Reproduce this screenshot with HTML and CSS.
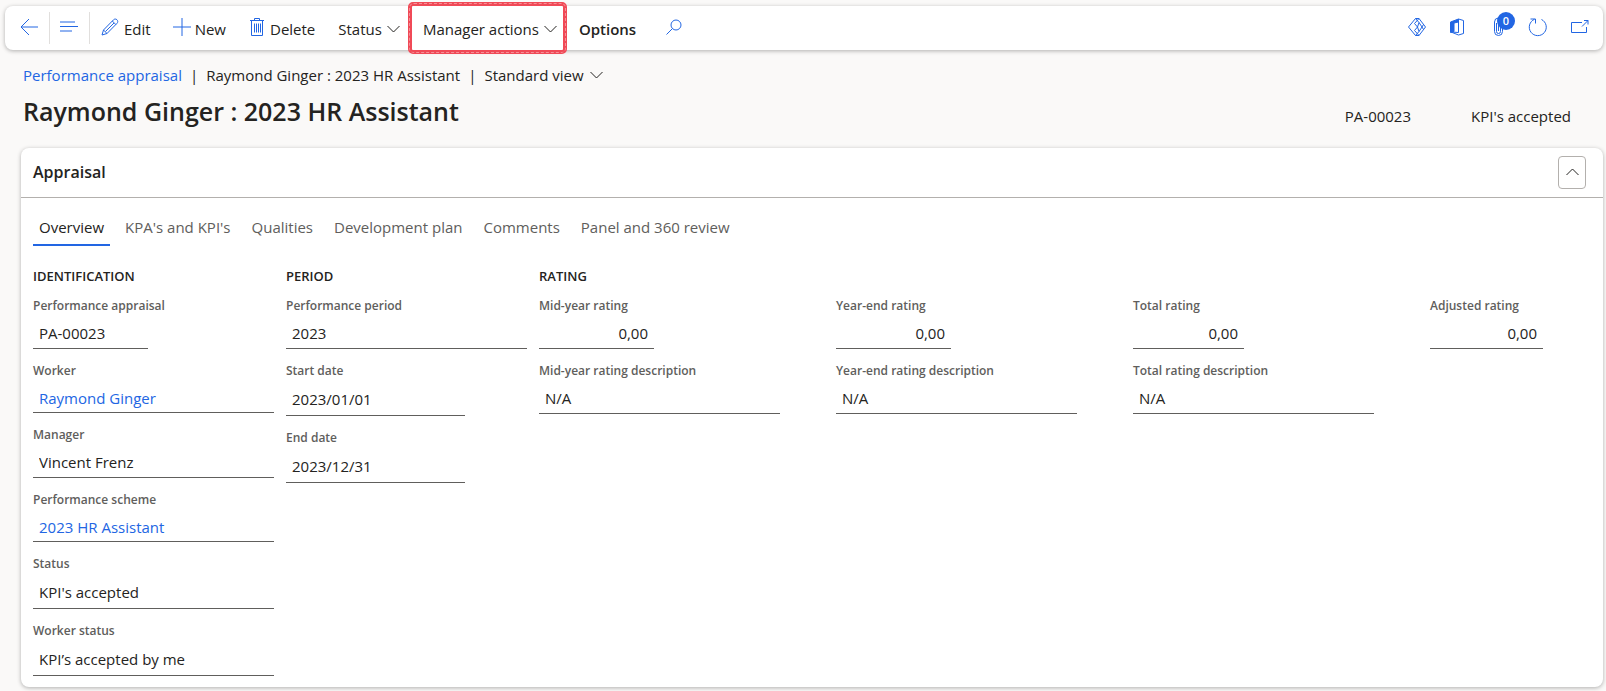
FILE: index.html
```html
<!DOCTYPE html>
<html lang="en">
<head>
  <meta charset="UTF-8" />
  <meta name="viewport" content="width=device-width, initial-scale=1.0" />
  <title>Raymond Ginger : 2023 HR Assistant</title>
  <link rel="stylesheet" href="styles.css">
</head>
<body>
  <header class="toolbar">
    <button class="tool tool-nav" aria-label="Back">
      <svg class="icon" viewBox="0 0 18 18"><path d="M18 9H1M9 1L1 9l8 8"/></svg>
    </button>
    <button class="tool tool-nav" aria-label="Show list">
      <svg class="icon" viewBox="0 0 18 18"><path d="M0 4h15M0 8.500h18M0 13h12"/></svg>
    </button>
    <button class="tool tool-edit">
      <svg class="icon" viewBox="0 0 18 18"><path d="M1 17l1.500-5L12.500 1.800c1-1 2.500-1 3.500 0s1 2.500 0 3.500L6 15.500 1 17zM2.500 12l3.500 3.500M11.300 3l3.600 3.600M4.500 13.500l8.500-8.500"/></svg>
      <span>Edit</span>
    </button>
    <button class="tool tool-new">
      <svg class="icon" viewBox="0 0 18 18"><path d="M9 0v18M0 9h18"/></svg>
      <span>New</span>
    </button>
    <button class="tool tool-delete">
      <svg class="icon icon-trash" viewBox="0 0 14 18"><path d="M0 2.500h14M4.500 2.500V.500h5v2M1.500 2.500v15h11v-15M4.500 5.500v9M6.500 5.500v9M8.500 5.500v9M10.500 5.500v9"/></svg>
      <span>Delete</span>
    </button>
    <button class="tool tool-menu">
      <span>Status</span>
      <svg class="chevron" viewBox="0 0 13 8"><path d="M.5 1l6 6 6-6"/></svg>
    </button>
    <button class="tool tool-menu highlighted">
      <span>Manager actions</span>
      <svg class="chevron" viewBox="0 0 13 8"><path d="M.5 1l6 6 6-6"/></svg>
    </button>
    <button class="tool tool-options"><span>Options</span></button>
    <button class="tool" aria-label="Search">
      <svg class="icon icon-search" viewBox="0 0 16 16"><circle cx="10" cy="6" r="5"/><path d="M6.500 9.500L.5 15.500"/></svg>
    </button>

    <div class="toolbar-end">
      <button class="tool" aria-label="Power Apps">
        <svg class="icon" viewBox="0 0 18 18"><path d="M7.500 .5h3.500L17.500 9 11 17.500H7.500L.5 9zM7.500 .5l3.500 4 3 4.500-3 4.500-3.500 4M11 .5L6.500 5.500 9.500 9l-3 3.500 4.500 5M11 4.500L9.500 9l1.500 4.500M9.500 9h0M14 9l1.500-2.500M14 9l1.500 2.500"/></svg>
      </button>
      <button class="tool" aria-label="Open in Office">
        <svg class="icon icon-office" viewBox="0 0 14 18"><path class="solid" d="M.5 4L8.500 1v3L4 5v8.500l-3.500 1z"/><path d="M8.500 1l5 1.500v13l-5 1.500L1 14l7.500 .5V1"/></svg>
      </button>
      <button class="tool tool-attach" aria-label="Attachments">
        <svg class="icon icon-clip" viewBox="0 0 9 18"><path d="M6.500 4v9.500a2 2 0 0 1-4 0V5M.5 4v9.500a4 4 0 0 0 8 0V4a3.500 3.500 0 0 0-8 0M4.500 5v8"/></svg>
        <span class="badge">0</span>
      </button>
      <button class="tool" aria-label="Refresh">
        <svg class="icon" viewBox="0 0 18 18"><path d="M12.500 1.500A8.500 8.500 0 1 1 5.500 1.300M1.500 1h5v4.500"/></svg>
      </button>
      <button class="tool" aria-label="Open in new window">
        <svg class="icon" viewBox="0 0 18 18"><path d="M11 4.500H.5v10h15V9M11 8.500l6-6M13 2.500h4v4"/></svg>
      </button>
    </div>
  </header>

  <nav class="breadcrumb">
    <a href="#">Performance appraisal</a>
    <span>|</span>
    <span>Raymond Ginger : 2023 HR Assistant</span>
    <span>|</span>
    <button class="view">
      Standard view
      <svg class="chevron" viewBox="0 0 13 8"><path d="M.5 1l6 6 6-6"/></svg>
    </button>
  </nav>

  <div class="page-title">
    <h1>Raymond Ginger : 2023 HR Assistant</h1>
    <div class="summary">
      <span>PA-00023</span>
      <span>KPI's accepted</span>
    </div>
  </div>

  <main class="card">
    <div class="card-header">
      <h2>Appraisal</h2>
      <button class="collapse" aria-label="Collapse">
        <svg class="chevron" viewBox="0 0 13 8"><path d="M.5 7l6-6 6 6"/></svg>
      </button>
    </div>

    <div class="tabs" role="tablist">
      <button class="tab active" role="tab" aria-selected="true">Overview</button>
      <button class="tab" role="tab">KPA's and KPI's</button>
      <button class="tab" role="tab">Qualities</button>
      <button class="tab" role="tab">Development plan</button>
      <button class="tab" role="tab">Comments</button>
      <button class="tab" role="tab">Panel and 360 review</button>
    </div>

    <form class="groups">
      <section>
        <h3>IDENTIFICATION</h3>
        <div class="field">
          <label for="appraisalId">Performance appraisal</label>
          <input class="short" type="text" id="appraisalId" value="PA-00023">
        </div>
        <div class="field">
          <span class="label">Worker</span>
          <a class="value-link" href="#">Raymond Ginger</a>
        </div>
        <div class="field">
          <label for="manager">Manager</label>
          <input type="text" id="manager" value="Vincent Frenz">
        </div>
        <div class="field">
          <span class="label">Performance scheme</span>
          <a class="value-link" href="#">2023 HR Assistant</a>
        </div>
        <div class="field">
          <label for="status">Status</label>
          <input class="tall" type="text" id="status" value="KPI's accepted">
        </div>
        <div class="field">
          <label for="workerStatus">Worker status</label>
          <input class="tall" type="text" id="workerStatus" value="KPI’s accepted by me">
        </div>
      </section>

      <section>
        <h3>PERIOD</h3>
        <div class="field">
          <label for="period">Performance period</label>
          <input type="text" id="period" value="2023">
        </div>
        <div class="field">
          <label for="startDate">Start date</label>
          <input class="tall date" type="text" id="startDate" value="2023/01/01">
        </div>
        <div class="field">
          <label for="endDate">End date</label>
          <input class="tall date" type="text" id="endDate" value="2023/12/31">
        </div>
      </section>

      <section>
        <h3>RATING</h3>
        <div class="ratings">
          <div>
            <div class="field">
              <label for="midRating">Mid-year rating</label>
              <input class="short number" type="text" id="midRating" value="0,00">
            </div>
            <div class="field">
              <label for="midDesc">Mid-year rating description</label>
              <input type="text" id="midDesc" value="N/A">
            </div>
          </div>
          <div>
            <div class="field">
              <label for="endRating">Year-end rating</label>
              <input class="short number" type="text" id="endRating" value="0,00">
            </div>
            <div class="field">
              <label for="endDesc">Year-end rating description</label>
              <input type="text" id="endDesc" value="N/A">
            </div>
          </div>
          <div>
            <div class="field">
              <label for="totalRating">Total rating</label>
              <input class="short number total" type="text" id="totalRating" value="0,00">
            </div>
            <div class="field">
              <label for="totalDesc">Total rating description</label>
              <input type="text" id="totalDesc" value="N/A">
            </div>
          </div>
          <div>
            <div class="field">
              <label for="adjustedRating">Adjusted rating</label>
              <input class="short number" type="text" id="adjustedRating" value="0,00">
            </div>
          </div>
        </div>
      </section>
    </form>
  </main>
</body>
</html>
```
FILE: styles.css
```css
:root {
  --bg: #faf9f8;
  --text: #242321;
  --muted: #605e5c;
  --blue: #2266e3;
  --line: #605e5c;
}
* {
  box-sizing: border-box;
}
body {
  margin: 0;
  padding: 6px 3px 5px 5px;
  font-family: 'Segoe UI', 'Open Sans', sans-serif;
  font-size: 15px;
  line-height: 20px;
  background: var(--bg);
  color: var(--text);
}
button {
  padding: 0;
  border: none;
  background: none;
  font: inherit;
  color: inherit;
  cursor: pointer;
}
a {
  color: var(--blue);
  text-decoration: none;
}
h1, h2, h3 {
  margin: 0;
  font-weight: 600;
}
svg {
  display: block;
  fill: none;
  stroke: currentColor;
  overflow: visible;
}

/* toolbar */
.toolbar {
  display: flex;
  align-items: center;
  height: 44px;
  background: #fff;
  border-radius: 8px;
  box-shadow: 0 1px 4px rgba(0, 0, 0, 0.3);
}
.tool {
  display: flex;
  align-items: center;
  position: relative;
  height: 32px;
}
.tool span {
  padding-top: 1px;
}
.icon {
  width: 18px;
  height: 18px;
  margin-bottom: 2px;
  color: var(--blue);
}
.icon-trash, .icon-office {
  width: 14px;
}
.icon-clip {
  width: 9px;
}
.icon-search {
  width: 16px;
  height: 16px;
}
.solid {
  fill: currentColor;
}
.chevron {
  width: 13px;
  height: 8px;
}
.tool-nav {
  padding: 0 11px 0 10px;
  border-right: 1px solid #e1dfdd;
}
.tool-nav:first-child {
  padding-left: 15px;
}
.tool-edit {
  gap: 5px;
  margin-left: 11px;
}
.tool-new {
  gap: 4px;
  margin-left: 22px;
}
.tool-delete {
  gap: 6px;
  margin-left: 24px;
}
.tool-menu {
  gap: 5px;
  margin-left: 23px;
}
.tool-menu .chevron {
  margin-top: 2px;
}
/* double stroke: red marker line with a lighter speckle in the middle */
.highlighted::before, .highlighted::after {
  content: '';
  position: absolute;
  inset: -10px -10px -10px -15px;
  border: 4px solid #f04a57;
  border-radius: 5px;
}
.highlighted::after {
  inset: -9px -9px -9px -14px;
  border: 1px dashed #f58f97;
}
.tool-options {
  margin: 0 30px 0 22px;
  font-weight: 600;
}
.toolbar-end {
  display: flex;
  gap: 24px;
  margin-left: auto;
  padding-right: 14px;
}
.tool-attach {
  padding: 0 2px 0 6px;
}
.tool .badge {
  position: absolute;
  top: 0;
  left: 9px;
  width: 18px;
  height: 18px;
  padding: 0;
  border-radius: 50%;
  background: var(--blue);
  color: #fff;
  font-size: 11px;
  font-weight: 600;
  line-height: 18px;
}

/* heading */
.breadcrumb {
  display: flex;
  gap: 8px;
  margin: 15px 0 0 18px;
}
.view {
  display: flex;
  align-items: center;
  gap: 6px;
}
.page-title {
  display: flex;
  justify-content: space-between;
  margin: 8px 32px 0 18px;
}
h1 {
  font-size: 25px;
  line-height: 36px;
}
.summary {
  display: flex;
  gap: 60px;
  padding-top: 13px;
}

/* card */
.card {
  margin: 19px 0 0 16px;
  background: #fff;
  border-radius: 8px;
  box-shadow: 0 1px 4px rgba(0, 0, 0, 0.3);
}
.card-header {
  display: flex;
  align-items: center;
  justify-content: space-between;
  height: 50px;
  padding: 0 17px 1px 12px;
  border-bottom: 1px solid #b3b0ad;
}
h2 {
  font-size: 16px;
}
.collapse {
  display: flex;
  align-items: center;
  justify-content: center;
  width: 28px;
  height: 33px;
  border: 1px solid #b3b0ad;
  border-radius: 4px;
}
.tabs {
  display: flex;
  gap: 9px;
  padding: 19px 12px 0;
}
.tab {
  padding: 0 6px 7px;
  border-bottom: 2px solid transparent;
  color: var(--muted);
}
.tab.active {
  border-color: var(--blue);
  color: var(--text);
}
.groups {
  display: grid;
  grid-template-columns: 241px 241px 1fr;
  gap: 12px;
  padding: 20px 60px 11px 12px;
}
h3 {
  margin-bottom: 11px;
  font-size: 13px;
  line-height: 20px;
}
.ratings {
  display: grid;
  grid-template-columns: repeat(3, 1fr) 113px;
}
.field {
  margin-bottom: 13px;
}
.field:last-child {
  margin-bottom: 0;
}
label, .label {
  display: block;
  font-size: 12px;
  font-weight: 600;
  line-height: 18px;
  color: var(--muted);
}
input, .value-link {
  display: block;
  width: 241px;
  max-width: 100%;
  height: 34px;
  padding: 3px 6px 0;
  border: none;
  border-bottom: 1px solid var(--line);
  background: none;
  font: inherit;
  color: inherit;
}
.value-link {
  height: 33px;
  padding-top: 8px;
  color: var(--blue);
}
input.tall {
  height: 36px;
}
input.short {
  width: 115px;
}
input.total {
  width: 111px;
}
input.date {
  width: 179px;
}
.number {
  text-align: right;
}
```
